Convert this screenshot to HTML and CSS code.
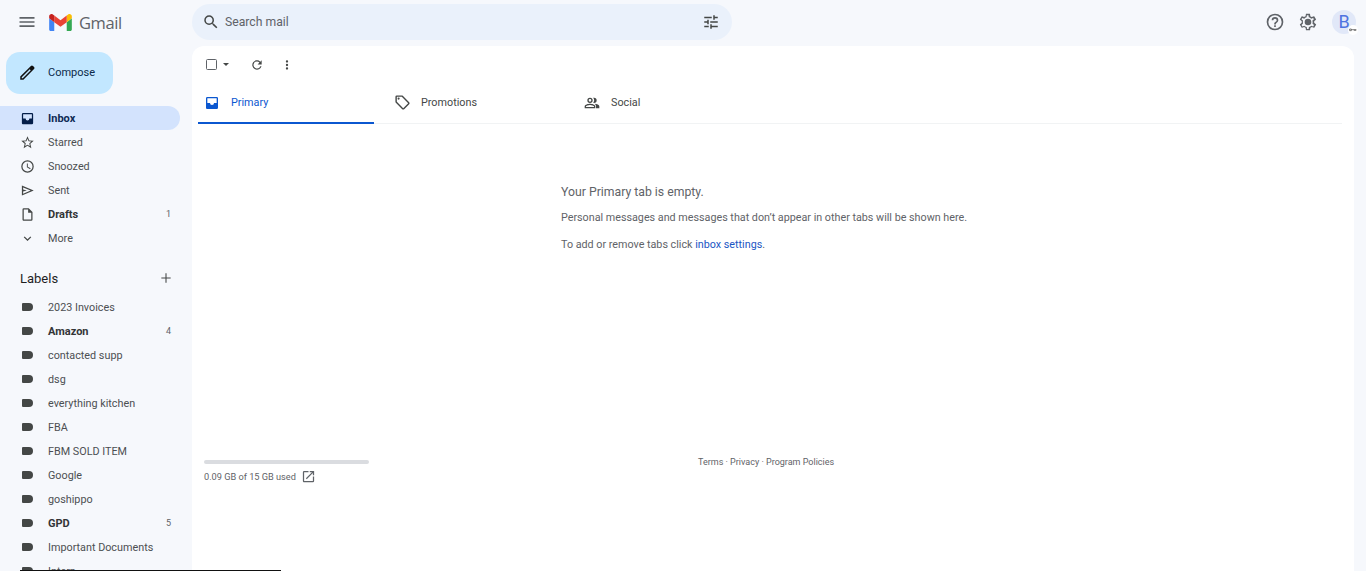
FILE: index.html
```html
<!DOCTYPE html>
<html lang="en">

<head>
    <meta charset="UTF-8" />
    <meta name="viewport" content="width=device-width,initial-scale=1.0" />
    <title>Inbox - Gmail</title>
    <link rel="stylesheet" href="styles.css">
</head>

<body>
    <header class="topbar">
        <div class="brand">
            <svg class="menu-icon" viewBox="0 0 24 24" width="20" height="20"><path fill="#5f6368" d="M3 18h18v-2H3v2zm0-5h18v-2H3v2zm0-7v2h18V6H3z"/></svg>
            <svg class="logo" viewBox="0 0 24 18" width="23" height="17">
                <path fill="#4285f4" d="M1.6 18h3.8V8.7L0 4.6v11.8C0 17.3.7 18 1.6 18z"/>
                <path fill="#34a853" d="M18.6 18h3.8c.9 0 1.6-.7 1.6-1.6V4.6l-5.4 4.1z"/>
                <path fill="#fbbc04" d="M18.6 1.6v7.1L24 4.6V2.4c0-2-2.3-3.100-3.900-1.900z"/>
                <path fill="#ea4335" d="M5.4 8.700V1.600L12 6.500l6.600-4.900v7.100L12 13.600z"/>
                <path fill="#c5221f" d="M0 2.400v2.200l5.400 4.100V1.600L3.900.5C2.300-.7 0 .4 0 2.400z"/>
            </svg>
            <span class="wordmark">Gmail</span>
        </div>
        <div class="search">
            <svg viewBox="0 0 24 24" width="18" height="18"><path fill="#444746" d="M15.500 14h-.79l-.28-.27A6.470 6.470 0 0 0 16 9.500 6.500 6.500 0 1 0 9.500 16c1.610 0 3.090-.59 4.230-1.570l.27.28v.79l5 4.990L20.490 19l-4.990-5zm-6 0C7.010 14 5 11.990 5 9.500S7.010 5 9.500 5 14 7.010 14 9.500 11.990 14 9.500 14z"/></svg>
            <span class="search-text">Search mail</span>
            <svg viewBox="0 0 24 24" width="18" height="18"><path fill="#444746" d="M3 17v2h6v-2H3zM3 5v2h10V5H3zm10 16v-2h8v-2h-8v-2h-2v6h2zM7 9v2H3v2h4v2h2V9H7zm14 4v-2H11v2h10zm-6-4h2V7h4V5h-4V3h-2v6z"/></svg>
        </div>
        <div class="top-actions">
            <svg viewBox="0 0 24 24" width="20" height="20"><path fill="#5f6368" d="M11 18h2v-2h-2v2zm1-16a10 10 0 1 0 0 20 10 10 0 0 0 0-20zm0 18a8 8 0 1 1 0-16 8 8 0 0 1 0 16zm0-14a4 4 0 0 0-4 4h2a2 2 0 1 1 4 0c0 2-3 1.750-3 5h2c0-2.250 3-2.500 3-5a4 4 0 0 0-4-4z"/></svg>
            <svg viewBox="0 0 24 24" width="20" height="20"><path fill="#5f6368" d="M19.400 13c0-.3.100-.6.100-1s0-.7-.1-1l2.100-1.600c.2-.2.200-.4.100-.6l-2-3.500c-.1-.2-.4-.3-.6-.2l-2.500 1c-.5-.4-1.100-.7-1.700-1l-.4-2.600c0-.3-.2-.5-.4-.5h-4c-.3 0-.5.200-.5.400l-.4 2.700c-.6.200-1.100.6-1.700 1l-2.500-1c-.2-.1-.5 0-.6.200l-2 3.500c-.1.200-.1.500.1.600L4.500 11c0 .3-.1.600-.1 1s0 .7.100 1l-2.100 1.600c-.2.200-.2.400-.1.600l2 3.500c.1.200.4.300.6.200l2.500-1c.5.400 1.100.7 1.700 1l.4 2.600c0 .3.200.5.500.5h4c.3 0 .5-.2.500-.4l.4-2.700c.6-.2 1.100-.6 1.700-1l2.500 1c.2.100.5 0 .6-.2l2-3.500c.1-.2.100-.5-.1-.6zm-1.900-1.400c.1.300.1.500.1.800s0 .5-.1.800l-.1 1 1.800 1.400-1 1.700-2.200-.9-.8.600c-.4.300-.8.500-1.200.7l-.9.400-.4 2.300h-1.900l-.3-2.300-1-.4c-.4-.2-.8-.4-1.200-.7l-.8-.6-2.200.9-1-1.700L6 13.700l-.1-1v-1.500l.1-1-1.800-1.400 1-1.700 2.200.9.800-.6c.4-.3.800-.5 1.200-.7l.9-.4.400-2.300h1.900l.3 2.300 1 .4c.4.200.8.400 1.200.7l.8.600 2.200-.9 1 1.700-1.800 1.400zM12 8a4 4 0 1 0 0 8 4 4 0 0 0 0-8z"/></svg>
            <div class="avatar">B<span class="avatar-badge"><svg viewBox="0 0 12 6" width="8" height="4"><path fill="none" stroke="#444" d="M1 1.500h2.500v2.500H1zM3.500 2.500H11M8 2.500v2M10 2.500v2"/></svg></span></div>
        </div>
    </header>

    <div class="layout">
        <aside class="sidebar">
            <button class="compose">
                <svg viewBox="0 0 24 24" width="18" height="18"><path fill="#111" d="M3 21v-4.200L17.200 2.600a2 2 0 0 1 2.800 0l1.400 1.400a2 2 0 0 1 0 2.800L7.200 21H3zm2-2h1.400L17 8.400 15.600 7 5 17.600V19z"/></svg>
                <span>Compose</span>
            </button>
            <nav class="nav-list">
                <a class="nav-row active bold">
                    <svg viewBox="0 0 24 24" width="15" height="15"><path fill="#041e49" d="M19 3H5a2 2 0 0 0-2 2v14c0 1.100.9 2 2 2h14a2 2 0 0 0 2-2V5a2 2 0 0 0-2-2zm0 9h-4a3 3 0 0 1-6 0H5V5h14v7z"/></svg>
                    <span>Inbox</span>
                </a>
                <a class="nav-row">
                    <svg viewBox="0 0 24 24" width="15" height="15"><path fill="#444746" d="M22 9.240l-7.190-.62L12 2 9.190 8.630 2 9.240l5.460 4.730L5.820 21 12 17.270 18.180 21l-1.630-7.030L22 9.240zM12 15.400l-3.760 2.270 1-4.280-3.320-2.880 4.380-.38L12 6.100l1.710 4.040 4.380.38-3.320 2.880 1 4.280L12 15.400z"/></svg>
                    <span>Starred</span>
                </a>
                <a class="nav-row">
                    <svg viewBox="0 0 24 24" width="15" height="15"><path fill="#444746" d="M12 2a10 10 0 1 0 0 20 10 10 0 0 0 0-20zm0 18a8 8 0 1 1 0-16 8 8 0 0 1 0 16zm.5-13H11v6l5.200 3.200.8-1.300-4.500-2.700V7z"/></svg>
                    <span>Snoozed</span>
                </a>
                <a class="nav-row">
                    <svg viewBox="0 0 24 24" width="15" height="15"><path fill="#444746" d="M3 20V4l19 8-19 8zm2-3l12-5L5 7v3.500l6 1.500-6 1.500V17z"/></svg>
                    <span>Sent</span>
                </a>
                <a class="nav-row bold">
                    <svg viewBox="0 0 24 24" width="15" height="15"><path fill="#444746" d="M14 2H6a2 2 0 0 0-2 2v16c0 1.100.9 2 2 2h12a2 2 0 0 0 2-2V8l-6-6zm4 18H6V4h7v5h5v11z"/></svg>
                    <span>Drafts</span>
                    <em class="count">1</em>
                </a>
                <a class="nav-row">
                    <svg viewBox="0 0 24 24" width="15" height="15"><path fill="#444746" d="M16.600 8.600L12 13.200 7.400 8.600 6 10l6 6 6-6z"/></svg>
                    <span>More</span>
                </a>
            </nav>
            <div class="labels-head">
                <span>Labels</span>
                <svg viewBox="0 0 24 24" width="16" height="16"><path fill="#444746" d="M19 12.800h-6.200V19h-1.600v-6.200H5v-1.600h6.200V5h1.600v6.200H19z"/></svg>
            </div>
            <div class="nav-list">
                <a class="nav-row"><i class="tag"></i><span>2023 Invoices</span></a>
                <a class="nav-row bold"><i class="tag"></i><span>Amazon</span><em class="count">4</em></a>
                <a class="nav-row"><i class="tag"></i><span>contacted supp</span></a>
                <a class="nav-row"><i class="tag"></i><span>dsg</span></a>
                <a class="nav-row"><i class="tag"></i><span>everything kitchen</span></a>
                <a class="nav-row"><i class="tag"></i><span>FBA</span></a>
                <a class="nav-row"><i class="tag"></i><span>FBM SOLD ITEM</span></a>
                <a class="nav-row"><i class="tag"></i><span>Google</span></a>
                <a class="nav-row"><i class="tag"></i><span>goshippo</span></a>
                <a class="nav-row bold"><i class="tag"></i><span>GPD</span><em class="count">5</em></a>
                <a class="nav-row"><i class="tag"></i><span>Important Documents</span></a>
                <a class="nav-row"><i class="tag"></i><span>Intern</span></a>
            </div>
        </aside>

        <main class="panel">
            <div class="toolbar">
                <span class="checkbox"></span>
                <span class="caret"></span>
                <svg class="refresh" viewBox="0 0 24 24" width="14" height="14"><path fill="#444746" d="M17.650 6.350A8 8 0 1 0 19.730 14h-2.080A6 6 0 1 1 12 6c1.660 0 3.140.69 4.220 1.780L13 11h7V4z"/></svg>
                <svg class="more" viewBox="0 0 24 24" width="14" height="14"><path fill="#444746" d="M12 8a2 2 0 1 0 0-4 2 2 0 0 0 0 4zm0 2a2 2 0 1 0 0 4 2 2 0 0 0 0-4zm0 6a2 2 0 1 0 0 4 2 2 0 0 0 0-4z"/></svg>
            </div>
            <div class="tabs">
                <div class="tab selected">
                    <svg viewBox="0 0 24 24" width="16" height="16"><path fill="#0b57d0" d="M19 3H5a2 2 0 0 0-2 2v14c0 1.100.9 2 2 2h14a2 2 0 0 0 2-2V5a2 2 0 0 0-2-2zm0 9h-4a3 3 0 0 1-6 0H5V5h14v7z"/></svg>
                    <span>Primary</span>
                </div>
                <div class="tab promotions">
                    <svg viewBox="0 0 24 24" width="17" height="17"><path fill="#444746" d="M21.400 11.600l-9-9C12 2.200 11.500 2 11 2H4a2 2 0 0 0-2 2v7c0 .6.200 1.100.6 1.400l9 9c.4.400.9.600 1.400.6s1-.2 1.400-.6l7-7c.4-.4.600-.9.600-1.400s-.2-1-.6-1.400zM13 20l-9-9V4h7l9 9-7 7zM6.500 5a1.500 1.500 0 1 0 0 3 1.500 1.500 0 0 0 0-3z"/></svg>
                    <span>Promotions</span>
                </div>
                <div class="tab">
                    <svg viewBox="0 0 24 24" width="16" height="16"><path fill="#444746" d="M9 13c-2.700 0-8 1.300-8 4v3h16v-3c0-2.700-5.300-4-8-4zm6 5H3v-1c.2-.7 3.300-2 6-2s5.800 1.300 6 2v1zM9 12a4 4 0 1 0 0-8 4 4 0 0 0 0 8zm0-6a2 2 0 1 1 0 4 2 2 0 0 1 0-4zm6.800 7.100c1.500 1 2.200 2.400 2.200 3.900v3h5v-3c0-2.300-3.600-3.600-7.200-3.900zM15 12a4 4 0 0 0 0-8c-.5 0-.9.100-1.300.2a6 6 0 0 1 0 7.600c.4.100.8.200 1.300.2z"/></svg>
                    <span>Social</span>
                </div>
            </div>
            <div class="empty">
                <h2>Your Primary tab is empty.</h2>
                <p>Personal messages and messages that don’t appear in other tabs will be shown here.</p>
                <p>To add or remove tabs click <a>inbox settings</a>.</p>
            </div>
            <div class="panel-foot">
                <div class="storage">
                    <div class="storage-bar"></div>
                    <div class="storage-text">
                        <span>0.09 GB of 15 GB used</span>
                        <svg viewBox="0 0 24 24" width="15" height="15"><path fill="#5f6368" d="M19 19H5V5h7V3H5a2 2 0 0 0-2 2v14c0 1.100.9 2 2 2h14a2 2 0 0 0 2-2v-7h-2v7zM14 3v2h3.600l-9.800 9.800 1.400 1.400L19 6.400V10h2V3h-7z"/></svg>
                    </div>
                </div>
                <div class="foot-links">Terms · Privacy · Program Policies</div>
            </div>
        </main>
    </div>

    <div class="edge-line"></div>
</body>

</html>
```

FILE: styles.css
```css
html,
body {
    height: 100%;
}

body {
    margin: 0;
    overflow: hidden;
    font-family: Roboto, "Liberation Sans", sans-serif;
    font-size: 10.8px;
    color: #4c4f52;
    background: #f6f8fc;
}

svg {
    display: block;
    flex: none;
}

/* top bar */
.topbar {
    height: 46px;
    display: flex;
    align-items: flex-start;
}

.brand {
    width: 192px;
    height: 44px;
    flex: none;
    display: flex;
    align-items: center;
    padding-left: 17px;
    box-sizing: border-box;
}

.logo {
    margin-left: 12px;
}

.wordmark {
    margin-left: 7px;
    font-size: 16.5px;
    color: #5f6368;
    font-family: "Open Sans", Roboto, sans-serif;
    letter-spacing: -0.4px;
}

.search {
    width: 540px;
    height: 36px;
    margin-top: 4px;
    padding: 0 12px 0 10px;
    box-sizing: border-box;
    display: flex;
    align-items: center;
    background: #eaf1fb;
    border-radius: 18px;
}

.search-text {
    flex: 1;
    margin: 0 0 1px 5px;
    font-size: 12.2px;
    color: #5f6368;
}

.top-actions {
    flex: 1;
    height: 44px;
    display: flex;
    align-items: center;
    justify-content: flex-end;
    gap: 13px;
    padding-right: 10px;
}

.avatar {
    position: relative;
    width: 24px;
    height: 24px;
    margin-left: 1px;
    border-radius: 50%;
    background: #e1e8f8;
    color: #4f74e0;
    font-size: 18px;
    line-height: 24px;
    text-align: center;
}

.avatar-badge {
    position: absolute;
    right: -2px;
    bottom: -1px;
    width: 10px;
    height: 10px;
    border-radius: 50%;
    background: #fff;
    display: flex;
    align-items: center;
    justify-content: center;
}

/* columns */
.layout {
    display: flex;
    height: calc(100% - 46px);
}

.sidebar {
    width: 192px;
    flex: none;
    overflow: hidden;
}

.compose {
    width: 107px;
    height: 42px;
    margin: 6px 0 12px 6px;
    padding: 0 0 1px 12px;
    display: flex;
    align-items: center;
    gap: 12px;
    border: none;
    border-radius: 14px;
    background: #c2e7ff;
    color: #0b2a4a;
    font-family: inherit;
    font-size: 11px;
}

.nav-row {
    width: 180px;
    height: 24px;
    box-sizing: border-box;
    padding: 0 9px 0 20px;
    display: flex;
    align-items: center;
    gap: 13px;
    border-radius: 0 12px 12px 0;
}

.nav-row span {
    flex: 1;
    white-space: nowrap;
}

.nav-row.bold {
    font-weight: 700;
    font-size: 11px;
    color: #333537;
}

.nav-row.active {
    background: #d3e3fd;
    color: #0f2a55;
}

.count {
    font-style: normal;
    font-weight: 400;
    font-size: 9px;
    color: #5f6368;
}

.tag {
    width: 11px;
    height: 8px;
    margin: 0 2px;
    flex: none;
    background: #444746;
    border-radius: 1px 4px 4px 1px;
}

.labels-head {
    height: 24px;
    margin-top: 16px;
    margin-bottom: 5px;
    padding: 0 6px 0 20px;
    width: 180px;
    box-sizing: border-box;
    display: flex;
    align-items: center;
    justify-content: space-between;
    font-size: 13px;
    color: #1f1f1f;
}

/* main panel */
.panel {
    flex: 1;
    margin-right: 12px;
    display: flex;
    flex-direction: column;
    background: #fff;
    border-radius: 12px 12px 0 0;
}

.toolbar {
    height: 37px;
    flex: none;
    padding-left: 14px;
    display: flex;
    align-items: center;
}

.checkbox {
    width: 9px;
    height: 9px;
    border: 1.5px solid #5f6368;
    border-radius: 1.5px;
}

.caret {
    margin-left: 6px;
    border: 3px solid transparent;
    border-top: 3px solid #444746;
    border-bottom: none;
}

.refresh {
    margin-left: 21px;
}

.more {
    margin-left: 16px;
}

.tabs {
    height: 41px;
    flex: none;
    box-sizing: border-box;
    margin: 0 12px 0 6px;
    display: flex;
    border-bottom: 1px solid #f1f3f4;
}

.tab {
    width: 190px;
    height: 41px;
    flex: none;
    box-sizing: border-box;
    padding-left: 20px;
    display: flex;
    align-items: center;
    gap: 11px;
    color: #444746;
    border-bottom: 2px solid transparent;
}

.tab.selected {
    width: 176px;
    padding-left: 6px;
    color: #0b57d0;
    border-bottom-color: #0b57d0;
}

.tab.promotions {
    gap: 10px;
}

.empty {
    height: 336px;
    flex: none;
    box-sizing: border-box;
    padding: 60px 0 0 369px;
    color: #5f6368;
}

.empty h2 {
    margin: 0 0 11px;
    font-size: 12.25px;
    font-weight: 400;
    line-height: 16px;
}

.empty p {
    margin: 0 0 14px;
    font-size: 10.75px;
    line-height: 13px;
}

.empty a {
    color: #1a56c4;
}

.panel-foot {
    display: flex;
    padding-left: 12px;
}

.storage {
    width: 165px;
    flex: none;
}

.storage-bar {
    height: 4px;
    border-radius: 2px;
    background: #dadce0;
}

.storage-text {
    margin-top: 5px;
    display: flex;
    align-items: center;
    gap: 5px;
    font-size: 9.2px;
    color: #5f6368;
}

.foot-links {
    margin: -3px 0 0 329px;
    font-size: 9px;
    color: #5f6368;
}

/* stray line along the bottom edge of the capture */
.edge-line {
    position: absolute;
    left: 20px;
    bottom: 0;
    width: 261px;
    height: 1px;
    background: #111;
}
```
